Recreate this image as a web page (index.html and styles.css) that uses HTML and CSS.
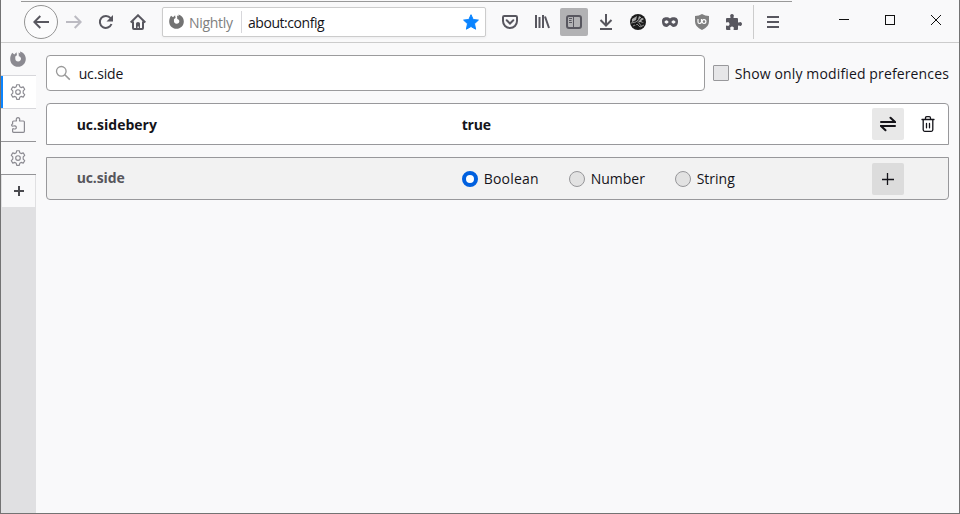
FILE: index.html
```html
<!DOCTYPE html>
<html lang="en">
<head>
<meta charset="utf-8">
<title>about:config</title>
<link rel="stylesheet" href="styles.css">
</head>
<body>
<svg class="defs" width="0" height="0">
  <symbol id="nightly" viewBox="0 0 16 16"><path fill="currentColor" d="M2.200 1.800 4.300 3.500 6.500 1.300 7 4.200C5.600 4.600 5 5.800 5.300 7 4.900 9 6.300 10.400 8.100 10.400 10 10.400 11.200 9 11 7.500 10.800 6.200 10 5.500 8.800 5.200L8.600 1.500 10.300 2.500 10 .6C13.500 1.400 15.800 4.500 15.800 8 15.800 12.400 12.300 15.800 8 15.800 3.600 15.800.2 12.400.2 8 .2 5.700.9 3.600 2.200 1.800Z"/></symbol>
  <symbol id="gear" viewBox="0 0 16 16"><g fill="none" stroke="currentColor" stroke-width="1.15" stroke-linejoin="round"><circle cx="8" cy="8" r="2.300"/><path d="M6.700.7h2.600l.5 2.100 1.300.8 2.100-.7 1.500 2.400-1.500 1.600v2.200l1.500 1.600-1.500 2.400-2.100-.7-1.300.8-.5 2.100H6.700l-.5-2.100-1.300-.8-2.100.7-1.500-2.400 1.500-1.600V6.900L1.300 5.300l1.500-2.400 2.100.7 1.300-.8Z"/></g></symbol>
</svg>
<div class="window">
  <header class="toolbar">
    <div class="back"><svg width="16" height="16" viewBox="0 0 16 16"><path class="s2" d="M16 8H1.500M7.300 2 1.300 8l6 6"/></svg></div>
    <div class="slot dim"><svg width="16" height="16" viewBox="0 0 16 16"><path class="s2" d="M0 8h14.500M8.700 2l6 6-6 6"/></svg></div>
    <div class="slot"><svg width="16" height="16" viewBox="0 0 16 16"><path class="s2" d="M12.600 4.200A6 6 0 1 0 13.500 10"/><path fill="currentColor" d="M15 1v6.500H8.500Z"/></svg></div>
    <div class="slot"><svg width="16" height="16" viewBox="0 0 16 16"><path class="s2" d="M.7 8.500 8 1.300l7.300 7.200M3 7.500V14q0 1 1 1h8q1 0 1-1V7.500"/><path fill="currentColor" d="M6 15V9.500Q6 8 8 8t2 1.500V15H8.800v-2.500H7.500V15Z"/></svg></div>
    <div class="urlbar">
      <svg class="brand" width="15" height="15"><use href="#nightly"/></svg>
      <span class="identity">Nightly</span>
      <span class="address">about:config</span>
      <svg class="star" width="16" height="16" viewBox="0 0 16 16"><path fill="#0a84ff" stroke="#0a84ff" stroke-linejoin="round" d="m8 .7 2.200 4.800 5.200.6-3.900 3.600 1.100 5.500L8 12.500l-4.600 2.700 1.100-5.500L.6 6.100l5.200-.6Z"/></svg>
    </div>
    <div class="slot"><svg width="16" height="16" viewBox="0 0 16 16"><path class="s2" d="M2.300 2h11.400q1.300 0 1.300 1.300V7a7 7 0 0 1-14 0V3.300Q1 2 2.300 2Z"/><path class="s2" stroke-linecap="round" d="M4.700 6.300 8 9.500l3.300-3.200"/></svg></div>
    <div class="slot"><svg width="16" height="16" viewBox="0 0 16 16"><path class="s2" d="M2 1v13M5.500 3v11M9 1v13M11 2.500 15 14"/></svg></div>
    <div class="slot"><div class="pressed"><svg width="16" height="16" viewBox="0 0 16 16"><rect class="s2" x="1" y="2" width="14" height="12" rx="2"/><path fill="none" stroke="currentColor" d="M7.500 2v12M3 4.500h3M3 6.500h2.500M3 8.500h3"/></svg></div></div>
    <div class="slot"><svg width="16" height="16" viewBox="0 0 16 16"><path class="s2" d="M8 0v11.500M2.500 6 8 11.500 13.500 6M2 15h12"/></svg></div>
    <div class="slot"><svg width="16" height="16" viewBox="0 0 16 16"><circle cx="8" cy="8" r="8" fill="#1c1c1c"/><path fill="#aaa" d="m2 5 5-3-1 4-4 2Zm7-3 5 3-3 2 3 2-4-1-3 1Z"/><path fill="none" stroke="#888" d="m3 12 4-2 3 3 4-2M1 9l5-1 4-4M9 9l3 4"/><path stroke="#111" d="m5 11 7-8"/></svg></div>
    <div class="slot"><svg width="16" height="16" viewBox="0 0 16 16"><path fill="currentColor" fill-rule="evenodd" d="M8 4.500C9.500 3 16 2 16 7.300c0 3.700-1.800 5.700-4.200 5.700C9.800 13 9 11 8 11S6.200 13 4.200 13C1.800 13 0 11 0 7.300 0 2 6.500 3 8 4.500ZM2.300 8q2.200 3.600 4.400 0-2.200-3.600-4.400 0Zm7 0q2.200 3.600 4.400 0-2.200-3.600-4.400 0Z"/></svg></div>
    <div class="slot"><div class="shield"><svg width="16" height="16" viewBox="0 0 16 16"><path fill="#808080" d="M8 0q3 2 7 2v5.500Q15 13 8 16 1 13 1 7.500V2q4 0 7-2Z"/><path fill="none" stroke="#fff" stroke-width="1.200" d="M4 5v3q0 1.500 1.500 1.500T7.500 8V5"/><circle cx="10" cy="7.600" r="1.900" fill="none" stroke="#fff" stroke-width="1.200"/></svg></div></div>
    <div class="slot"><svg width="16" height="16" viewBox="0 0 16 16"><path fill="currentColor" d="M0 5q0-1 1-1h3q.8 0 .5-1Q3.800 2 4.300 1 5 0 6 0t1.700 1q.5 1-.2 2-.3 1 .5 1h3q1 0 1 1v3q0 .8 1 .5 1-.7 2-.2 1 .6 1 1.700t-1 1.700q-1 .5-2-.2-1-.3-1 .5v3q0 1-1 1H8q-.7 0-.4-1 .6-1 0-1.800Q7 12.500 6 12.500t-1.600.7q-.6.800 0 1.800.3 1-.4 1H1q-1 0-1-1v-3q0-.7 1-.4 1 .6 1.900 0Q3.500 11 3.500 10t-.6-1.600q-.9-.6-1.900 0-1 .3-1-.4Z"/></svg></div>
    <div class="menu"><svg width="12" height="12" viewBox="0 0 12 12"><path class="s2" d="M0 1h12M0 6h12M0 11h12"/></svg></div>
    <div class="controls">
      <div class="control"><svg width="10" height="10" shape-rendering="crispEdges"><path stroke="#111" d="M0 4.500h10"/></svg></div>
      <div class="control"><svg width="10" height="10"><rect x=".5" y=".5" width="9" height="9" fill="none" stroke="#111"/></svg></div>
      <div class="control"><svg width="10" height="10"><path stroke="#111" d="m0 0 10 10M10 0 0 10"/></svg></div>
    </div>
  </header>
  <div class="body">
    <nav class="tabs">
      <div class="tab"><svg width="16" height="16"><use href="#nightly"/></svg></div>
      <div class="tab active"><svg width="16" height="16"><use href="#gear"/></svg></div>
      <div class="tab dark"><svg width="16" height="16" viewBox="0 0 16 16"><path fill="none" stroke="currentColor" stroke-width="1.200" d="M2.600 7V5q0-1 1-1H6q.8 0 .3-1Q6 .7 8 .7t1.700 2.300q-.5 1 .3 1h3.400q1 0 1 1v9.300q0 1-1 1H3.600q-1 0-1-1v-2q0-.8 1-.5 2.700.7 2.700-1.300t-2.700-1.500q-2 .5-2-1 0-1 1-1Z"/></svg></div>
      <div class="tab dark"><svg width="16" height="16"><use href="#gear"/></svg></div>
      <div class="tab new"><svg width="10" height="10"><path class="s2" d="M0 5h10M5 0v10"/></svg></div>
    </nav>
    <main class="config">
      <div class="filters">
        <div class="search"><svg width="16" height="16" viewBox="0 0 16 16"><circle cx="6.300" cy="6.300" r="4.800" fill="none" stroke="#999" stroke-width="1.300"/><path stroke="#999" stroke-width="1.500" d="m9.800 9.800 5 4.800"/></svg><span class="query">uc.side</span></div>
        <span class="checkbox"></span><span class="show">Show only modified preferences</span>
      </div>
      <div class="row">
        <span class="name">uc.sidebery</span><span class="value">true</span>
        <span class="button"><svg width="16" height="16" viewBox="0 0 16 16"><path fill="none" stroke="#15141a" stroke-width="2" stroke-linecap="round" d="M1 6h14l-4.500-4.300M15 10H1l4.500 4.300"/></svg></span>
        <span class="trash"><svg width="16" height="16" viewBox="0 0 16 16"><path fill="none" stroke="#15141a" stroke-width="1.300" stroke-linecap="round" d="M2 3.500h12M5.500 3V2q0-1.300 1.300-1.300h2.400q1.300 0 1.300 1.300v1M3.200 4v9.800q0 1.500 1.500 1.500h6.600q1.500 0 1.500-1.500V4M6.500 7.500v4.300M9.500 7.500v4.300"/></svg></span>
      </div>
      <div class="row add">
        <span class="name">uc.side</span>
        <span class="types"><i class="radio on"></i><span class="boolean">Boolean</span><i class="radio"></i><span class="number">Number</span><i class="radio"></i><span class="string">String</span></span>
        <span class="button"><svg width="12" height="12"><path stroke="#15141a" stroke-width="1.300" d="M0 6.500h12M5.500 0v12"/></svg></span>
      </div>
    </main>
  </div>
</div>
</body>
</html>
```
FILE: styles.css
```css
* { box-sizing: border-box; }
body { margin: 0; font: 14px/20px "Open Sans", "Noto Sans", sans-serif; color: #15141a; }
svg { display: block; flex: none; }
.defs { position: absolute; }
.s2 { fill: none; stroke: currentColor; stroke-width: 2; }
.window { position: relative; width: 960px; height: 514px; display: flex; flex-direction: column; background: #f9f9fa; border: 1px solid #737373; border-top: 0; }
.window::before { content: ""; position: absolute; top: 1px; left: 20px; width: 771px; height: 1px; background: #999; }
.toolbar { height: 43px; padding: 1px 0 0 23px; display: flex; align-items: center; border-bottom: 1px solid #ccc; color: #58575f; flex: none; }
.back { width: 34px; height: 34px; border: 1px solid #949494; border-radius: 50%; display: flex; align-items: center; justify-content: center; background: #fbfbfc; }
.slot { width: 32px; height: 32px; display: flex; align-items: center; justify-content: center; }
.dim { color: #bcbbc2; }
.urlbar { width: 324px; height: 30px; margin: 0 8px; padding: 0 6px; border: 1px solid #ccc; border-radius: 2px; background: #fff; display: flex; align-items: center; box-shadow: 0 1px 3px #0000000d; }
.brand { color: #737373; }
.identity { width: 53px; height: 22px; padding-top: 2px; line-height: 20px; margin-left: 5px; border-right: 1px solid #d7d7db; color: #808080; letter-spacing: -.3px; }
.address { margin-left: 6px; padding-top: 2px; color: #15141a; flex: 1; letter-spacing: -.45px; }
.pressed { width: 28px; height: 28px; background: #b2b2b4; border-radius: 2px; display: flex; align-items: center; justify-content: center; }
.menu { width: 37px; height: 34px; margin-left: 3px; padding-left: 13px; border-left: 1px solid #ccc; display: flex; align-items: center; }
.controls { display: flex; margin-left: auto; padding-bottom: 4px; }
.control { width: 46px; display: flex; justify-content: center; }
.body { flex: 1; display: flex; }
.tabs { width: 35px; background: #e0e0e2; color: #8b8a91; }
.tab { height: 33px; padding-right: 1px; background: #f9f9fa; border-bottom: 1px solid #d7d7db; display: flex; align-items: center; justify-content: center; }
.active { background: #fff; box-shadow: inset 2px 0 #0a84ff; }
.dark { border-color: #949497; }
.new { color: #4a4a4f; margin-left: 1px; padding: 0 0 0 1px; border-color: #e0e0e2; border-right: 1px solid #e0e0e2; }
.config { flex: 1; padding: 12px 10px 0; display: flex; flex-direction: column; gap: 12px; }
.filters { height: 36px; display: flex; align-items: center; }
.search { width: 659px; height: 36px; border: 1px solid #9b9b9d; border-radius: 4px; background: #fff; display: flex; align-items: center; padding-left: 8px; gap: 8px; }
.query { padding-top: 2px; letter-spacing: -.15px; }
.checkbox { width: 16px; height: 16px; margin: 0 6px 0 8px; border: 1px solid #98989b; border-radius: 1px; background: #e6e6e8; }
.show { white-space: nowrap; padding-top: 2px; letter-spacing: .135px; }
.row { height: 42px; padding-left: 30px; border: 1px solid #98989b; border-radius: 4px 4px 0 0; background: #fff; display: flex; align-items: center; font-weight: 700; }
.name { width: 385px; padding-top: 2px; }
.value { width: 410px; padding-top: 2px; letter-spacing: -.2px; }
.button { width: 32px; height: 32px; border-radius: 2px; background: #e8e8e8; display: flex; align-items: center; justify-content: center; }
.trash { margin-left: 16px; }
.add { height: 43px; background: #f2f2f2; border-radius: 0 0 4px 4px; }
.add .name { color: #57565c; padding: 0 0 2px; letter-spacing: -.1px; }
.add .button { background: #dcdcdc; }
.types { width: 410px; display: flex; align-items: center; font-weight: 400; }
.radio { width: 16px; height: 16px; border: 1px solid #97979a; border-radius: 50%; background: #e2e2e2; margin-right: 6px; }
.on { border: 4px solid #0060df; background: #fff; }
.boolean { width: 85px; letter-spacing: .2px; }
.number { width: 84px; }
```
